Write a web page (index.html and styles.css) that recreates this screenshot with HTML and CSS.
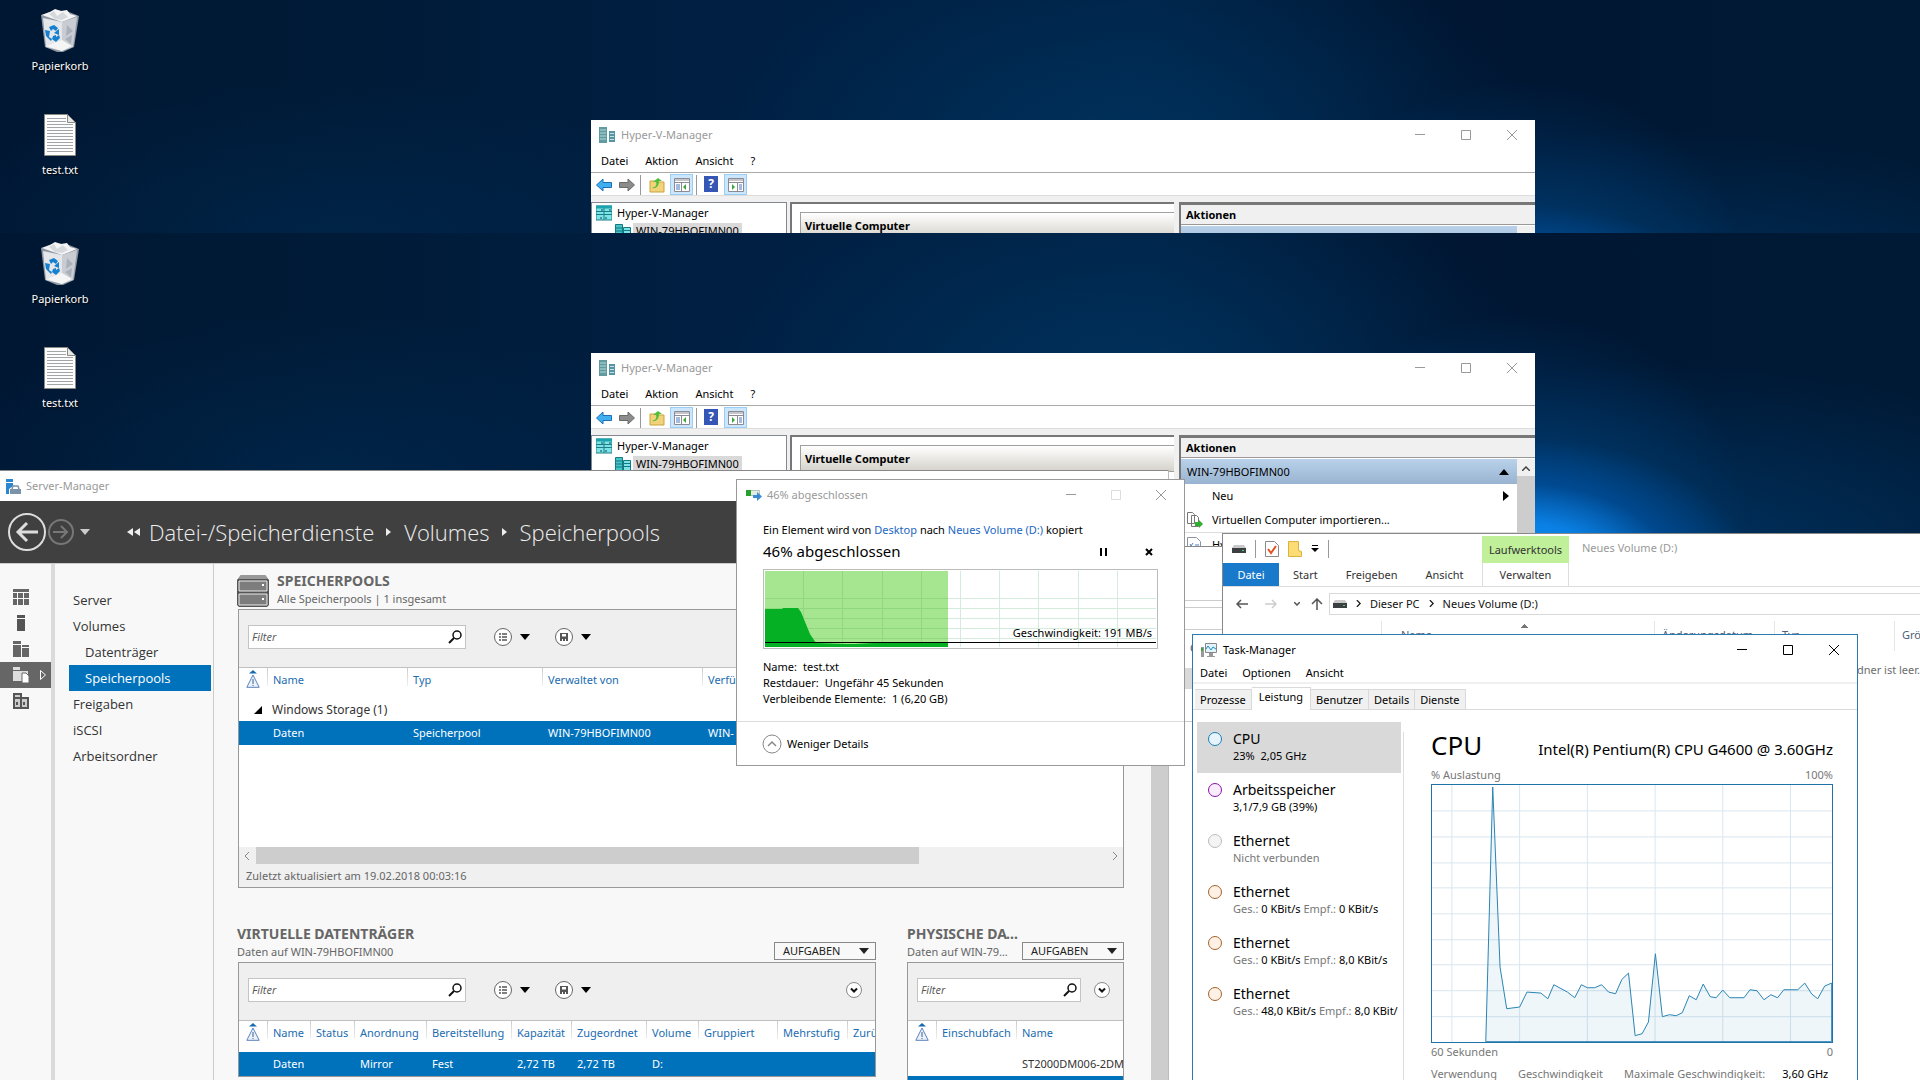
FILE: index.html
```html
<!DOCTYPE html>
<html lang="de">
<head>
    <meta charset="UTF-8">
    <meta name="viewport" content="width=device-width, initial-scale=1.0">
    <title>Desktop</title>
    <link rel="stylesheet" href="styles.css">
</head>
<body>
    <!-- shared icons -->
    <svg class="sprite" aria-hidden="true">
        <symbol id="bin" viewBox="0 0 38 43">
            <path d="M0 6l4 32 12 5h6l11-5 5-31-10-4-14-2z" fill="#8d97a3"/>
            <path d="M1 6l8-3 5-3 6 2 6-1 3 4 7 2-15 6z" fill="#f4f4f4"/>
            <path d="M8 5l5-3 3 5 6-4 5 5-6 3-7-1z" fill="#d5d9dc"/>
            <path d="M2 9l19 4v29L5 38z" fill="#e4e6ea"/>
            <path d="M21 13l15-5-4 30-11 4z" fill="#c9cdd3"/>
            <path d="M26 16l6 6-7 5zM24 30l7-4-1 9z" fill="#aab0b9"/>
            <path d="M6 37l15-6 10 6-10 5z" fill="#f5f5f5"/>
            <path d="M8 18l5-2 4 3-2 3-3-2-2 2zM4 21l5 1-1 6 3 2-1 2-5-5zM18 20v6l-5-2zM12 27l3-1v2l3-2 1 3-4 4-4-3z" fill="#1580d0"/>
        </symbol>
        <symbol id="textfile" viewBox="0 0 32 42">
            <path d="M.5.5h23l8 8v33H.5z" fill="#fdfdfd" stroke="#8a8a82"/>
            <path d="M23.500.5v8h8z" fill="#e6e6e6" stroke="#8a8a82"/>
            <path d="M3 4.500h19M3 7.500h19M3 10.500h26M3 13.500h26M3 16.500h26M3 19.500h26M3 22.500h26M3 25.500h26M3 28.500h26M3 31.500h26M3 34.500h26M3 37.500h26" stroke="#a2a5a8"/>
        </symbol>
        <symbol id="hyperv" viewBox="0 0 16 16">
            <path d="M0 0h8v16H0z" fill="#5f9ba0"/><path d="M1 3h6M1 6h6M1 9h6M1 12h6" stroke="#b9d8d8"/>
            <path d="M10 4h6v11h-6z" fill="#5795a5"/><path d="M11 6.500h4M11 9.500h4M11 12.500h4" stroke="#c5e0e0"/>
        </symbol>
        <symbol id="servers" viewBox="0 0 16 16">
            <path d="M0 1h16v14H0z" fill="#7ee3e6" stroke="#1c7f87"/>
            <path d="M0 2h16" stroke="#1ba4ad" stroke-width="3"/><path d="M8 3v12M0 6.500h16M0 9.500h16" stroke="#1c7f87"/>
            <path d="M5 5h2M13 5h2M5 12v2M10 12v2" stroke="#0d4f55"/>
        </symbol>
        <symbol id="host" viewBox="0 0 16 16">
            <path d="M.5 1.500h7v13h-7z" fill="#46c4ca" stroke="#137a82"/><path d="M8.500 4.500h7v10h-7z" fill="#7ee3e6" stroke="#137a82"/>
            <path d="M1 5h6M1 8h6M1 11h6M9 7.500h6M9 10.500h6" stroke="#137a82"/>
        </symbol>
        <symbol id="bigback" viewBox="0 0 16 14">
            <path d="M.5 7l6.500-6v3.500h8.500v5H7V13z" fill="#3fb0ef" stroke="#1c6fb5"/>
        </symbol>
        <symbol id="bigfwd" viewBox="0 0 16 14">
            <path d="M15.500 7L9 1v3.500H.5v5H9V13z" fill="#8c8c8c" stroke="#6a6a6a"/>
        </symbol>
        <symbol id="upfolder" viewBox="0 0 16 16">
            <path d="M1 4h5l1 1h8v10H1z" fill="#f2d27a" stroke="#c9a43e"/>
            <path d="M3 11c4-1 5-3 4-6H4l5-4 4 3h-3c0 5-3 8-7 7z" fill="#4fbf3a"/>
        </symbol>
        <symbol id="paneleft" viewBox="0 0 16 14">
            <path d="M.5.5h15v13H.5z" fill="#fff" stroke="#8b8b95"/><path d="M1 2h14M1 4.500h14M7.500 4v10" stroke="#8b8b95"/>
            <path d="M2 7h4M2 9h4M2 11h4" stroke="#4a74b8"/><path d="M12 6v6l-3-3z" fill="#3fa53a"/>
        </symbol>
        <symbol id="paneright" viewBox="0 0 16 14">
            <path d="M.5.5h15v13H.5z" fill="#fff" stroke="#8b8b95"/><path d="M1 2h14M1 4.500h14M9.500 4v10" stroke="#8b8b95"/>
            <path d="M11 7h3M11 9h3M11 11h3" stroke="#4a74b8"/><path d="M4 6v6l3-3z" fill="#3fa53a"/>
        </symbol>
        <symbol id="min" viewBox="0 0 10 10"><path d="M0 4.500h10" stroke="currentColor"/></symbol>
        <symbol id="max" viewBox="0 0 10 10"><path d="M.5.5h9v9h-9z" fill="none" stroke="currentColor"/></symbol>
        <symbol id="close" viewBox="0 0 10 10"><path d="M0 0l10 10M10 0L0 10" stroke="currentColor"/></symbol>
        <symbol id="down" viewBox="0 0 10 6"><path d="M0 0h10L5 6z" fill="currentColor"/></symbol>
        <symbol id="scrollup" viewBox="0 0 8 5"><path d="M0 5l4-4 4 4" fill="none" stroke="#444" stroke-width="1.500"/></symbol>
        <symbol id="search" viewBox="0 0 14 14">
            <circle cx="9" cy="5" r="4" fill="none" stroke="#111" stroke-width="1.500"/><path d="M6 8l-5 5" stroke="#111" stroke-width="2"/>
        </symbol>
        <symbol id="list" viewBox="0 0 18 18">
            <circle cx="9" cy="9" r="8.500" fill="#fff" stroke="#666"/>
            <path d="M5 6h2M8 6h5M5 9h2M8 9h5M5 12h2M8 12h5" stroke="#555" stroke-width="1.500"/>
        </symbol>
        <symbol id="save" viewBox="0 0 18 18">
            <circle cx="9" cy="9" r="8.500" fill="#fff" stroke="#666"/>
            <path d="M5 5h8v8H5z" fill="#555"/><path d="M7 6h4v2.500H7zM7 11h1v2H7zM10 11h1v2h-1z" fill="#fff"/>
        </symbol>
        <symbol id="expand" viewBox="0 0 16 16">
            <circle cx="8" cy="8" r="7.500" fill="#fff" stroke="#888"/><path d="M5 6.500l3 3 3-3" fill="none" stroke="#111" stroke-width="2"/>
        </symbol>
        <symbol id="warn" viewBox="0 0 14 18">
            <path d="M3 3.500L7 0l4 3.500z" fill="#1569ae"/>
            <path d="M7 5l6.200 12.300H.8z" fill="#eef3fb" stroke="#5b83bd"/><path d="M7 9v5M7 15v1" stroke="#35608f"/>
        </symbol>
        <symbol id="drive" viewBox="0 0 14 8">
            <path d="M2 0h10l2 3H0z" fill="#c9c9c9"/><path d="M0 3h14v5H0z" fill="#3c3f42"/><path d="M10 5h2v1h-2z" fill="#3ee06b"/>
        </symbol>
        <symbol id="chev" viewBox="0 0 6 8"><path d="M1 0l4 4-4 4" fill="none" stroke="currentColor" stroke-width="1.500"/></symbol>
    </svg>

    <div class="strip strip-top">
        <div class="shortcuts">
            <a class="shortcut" href="#"><svg width="38" height="43"><use href="#bin"/></svg><span>Papierkorb</span></a>
            <a class="shortcut" href="#"><svg width="32" height="42"><use href="#textfile"/></svg><span>test.txt</span></a>
        </div>
        <section class="window hyperv">
            <header class="titlebar inactive">
                <svg width="16" height="16"><use href="#hyperv"/></svg><span class="caption">Hyper-V-Manager</span>
                <button aria-label="Minimieren"><svg><use href="#min"/></svg></button>
                <button aria-label="Maximieren"><svg><use href="#max"/></svg></button>
                <button aria-label="Schließen"><svg><use href="#close"/></svg></button>
            </header>
            <nav class="menu"><button>Datei</button><button>Aktion</button><button>Ansicht</button><button>?</button></nav>
            <div class="tools">
                <button aria-label="Zurück"><svg width="16" height="14"><use href="#bigback"/></svg></button>
                <button aria-label="Vorwärts"><svg width="16" height="14"><use href="#bigfwd"/></svg></button>
                <i class="sep"></i>
                <button aria-label="Nach oben"><svg width="16" height="16"><use href="#upfolder"/></svg></button>
                <button class="on" aria-label="Konsolenstruktur"><svg width="16" height="14"><use href="#paneleft"/></svg></button>
                <i class="sep"></i>
                <button class="help">?</button>
                <button class="on" aria-label="Aktionsbereich"><svg width="16" height="14"><use href="#paneright"/></svg></button>
            </div>
            <div class="panes">
                <div class="tree">
                    <div><svg width="16" height="16"><use href="#servers"/></svg><span>Hyper-V-Manager</span></div>
                    <div class="child"><svg width="16" height="16"><use href="#host"/></svg><span class="sel">WIN-79HBOFIMN00</span></div>
                </div>
                <div class="middle"><h2>Virtuelle Computer</h2></div>
                <div class="actions">
                    <h2>Aktionen</h2>
                    <div class="actions-body">
                        <div class="actions-list"><div class="group"></div></div>
                        <div class="vscroll"><svg width="8" height="5"><use href="#scrollup"/></svg></div>
                    </div>
                </div>
            </div>
        </section>
    </div>

    <div class="strip strip-main">
        <div class="shortcuts">
            <a class="shortcut" href="#"><svg width="38" height="43"><use href="#bin"/></svg><span>Papierkorb</span></a>
            <a class="shortcut" href="#"><svg width="32" height="42"><use href="#textfile"/></svg><span>test.txt</span></a>
        </div>
        <section class="window hyperv">
            <header class="titlebar inactive">
                <svg width="16" height="16"><use href="#hyperv"/></svg><span class="caption">Hyper-V-Manager</span>
                <button aria-label="Minimieren"><svg><use href="#min"/></svg></button>
                <button aria-label="Maximieren"><svg><use href="#max"/></svg></button>
                <button aria-label="Schließen"><svg><use href="#close"/></svg></button>
            </header>
            <nav class="menu"><button>Datei</button><button>Aktion</button><button>Ansicht</button><button>?</button></nav>
            <div class="tools">
                <button aria-label="Zurück"><svg width="16" height="14"><use href="#bigback"/></svg></button>
                <button aria-label="Vorwärts"><svg width="16" height="14"><use href="#bigfwd"/></svg></button>
                <i class="sep"></i>
                <button aria-label="Nach oben"><svg width="16" height="16"><use href="#upfolder"/></svg></button>
                <button class="on" aria-label="Konsolenstruktur"><svg width="16" height="14"><use href="#paneleft"/></svg></button>
                <i class="sep"></i>
                <button class="help">?</button>
                <button class="on" aria-label="Aktionsbereich"><svg width="16" height="14"><use href="#paneright"/></svg></button>
            </div>
            <div class="panes">
                <div class="tree">
                    <div><svg width="16" height="16"><use href="#servers"/></svg><span>Hyper-V-Manager</span></div>
                    <div class="child"><svg width="16" height="16"><use href="#host"/></svg><span class="sel">WIN-79HBOFIMN00</span></div>
                </div>
                <div class="middle"><h2>Virtuelle Computer</h2></div>
                <div class="actions">
                    <h2>Aktionen</h2>
                    <div class="actions-body">
                        <div class="actions-list">
                            <button class="group"><span>WIN-79HBOFIMN00</span><svg width="10" height="6" viewBox="0 0 10 6"><path d="M0 6h10L5 0z"/></svg></button>
                            <button><i></i><span>Neu</span><svg width="6" height="10" viewBox="0 0 6 10"><path d="M0 0v10l6-5z"/></svg></button>
                            <button><i><svg width="16" height="16" viewBox="0 0 16 16"><path d="M.5.5h5l2 2v9h-7zM4.500 3.500h5l2 2v9h-7z" fill="#fff" stroke="#777"/><path d="M8 10h4V8l4 4-4 4v-2H8z" fill="#2fae2f"/></svg></i><span>Virtuellen Computer importieren...</span></button>
                            <button class="ruled"><i><svg width="14" height="16" viewBox="0 0 14 16"><path d="M.5.5h9l4 4v11H.500z" fill="#fff" stroke="#8a94a0"/><path d="M3 7l1 2 2-3M8 8h4M3 12l1 1 2-3M8 12h4" fill="none" stroke="#4a83c4"/></svg></i><span>Hy</span></button>
                        </div>
                        <div class="vscroll"><svg width="8" height="5"><use href="#scrollup"/></svg></div>
                    </div>
                </div>
            </div>
        </section>
    </div>

    <div class="window backdrop">
        <div class="row-a"></div><div class="row-b"></div><div class="row-c">C</div><div class="row-d"></div>
    </div>

    <section class="window server">
        <header class="titlebar inactive">
            <svg width="16" height="15" viewBox="0 0 16 15"><path d="M0 0h7v3H0zM0 4h7v3l-4 3v5H0z" fill="#2b87cf"/><path d="M4 10h11v5H4z" fill="#7a93a8"/><path d="M6 10l1-3h5l1 3" fill="none" stroke="#7a93a8" stroke-width="1.500"/></svg>
            <span class="caption">Server-Manager</span>
        </header>
        <div class="crumbbar">
            <button aria-label="Zurück"><svg width="38" height="38" viewBox="0 0 38 38"><circle cx="19" cy="19" r="18" fill="none" stroke="#ddd" stroke-width="2"/><path d="M30 19H10M19 10l-9 9 9 9" fill="none" stroke="#ddd" stroke-width="3"/></svg></button>
            <button aria-label="Vorwärts"><svg width="26" height="26" viewBox="0 0 26 26"><circle cx="13" cy="13" r="12" fill="none" stroke="#777" stroke-width="2"/><path d="M5 13h14M13 7l6 6-6 6" fill="none" stroke="#777" stroke-width="2"/></svg></button>
            <svg class="drop" width="10" height="6"><use href="#down"/></svg>
            <svg class="first" width="14" height="8" viewBox="0 0 14 8"><path d="M6 0v8L0 4zM13 0v8L7 4z" fill="#eee"/></svg>
            <a href="#">Datei-/Speicherdienste</a>
            <svg width="6" height="8" viewBox="0 0 6 8"><path d="M0 0v8l5-4z" fill="#eee"/></svg>
            <a href="#">Volumes</a>
            <svg width="6" height="8" viewBox="0 0 6 8"><path d="M0 0v8l5-4z" fill="#eee"/></svg>
            <a href="#">Speicherpools</a>
        </div>
        <div class="server-body">
            <div class="rail">
                <a href="#" aria-label="Dashboard"><svg width="16" height="16" viewBox="0 0 16 16"><path d="M0 0h16v3H0zM0 4h4v5H0zM5 4h5v5H5zM11 4h5v5h-5zM0 10h4v6H0zM5 10h5v6H5zM11 10h5v6h-5z" fill="#666"/></svg></a>
                <a href="#" aria-label="Lokaler Server"><svg width="16" height="16" viewBox="0 0 16 16"><path d="M4 0h8v3H4zM4 4h8v12H4z" fill="#555"/></svg></a>
                <a href="#" aria-label="Alle Server"><svg width="16" height="16" viewBox="0 0 16 16"><path d="M0 0h8v3H0zM0 4h8v12H0zM9 4h7v2H9zM9 7h7v9H9z" fill="#666"/></svg></a>
                <a href="#" class="sel" aria-label="Dateidienste"><svg width="16" height="16" viewBox="0 0 16 16"><path d="M0 0h7v3H0zM0 4h15v3H9v7H0z" fill="#ddd"/><path d="M9 6h4l3 3v7H9z" fill="#fff" stroke="#666"/></svg><svg width="6" height="10" viewBox="0 0 6 10"><path d="M.5.5v9l5-4.500z" fill="none" stroke="#fff"/></svg></a>
                <a href="#" aria-label="Hyper-V"><svg width="16" height="16" viewBox="0 0 16 16"><path d="M1 1h7v14H1zM8 5h7v10H8z" fill="#ccc" stroke="#555" stroke-width="2"/><path d="M1 5h6M4 9v3M11 9v3" stroke="#555" stroke-width="2"/></svg></a>
            </div>
            <nav class="sidenav">
                <a href="#">Server</a>
                <a href="#">Volumes</a>
                <a href="#" class="sub">Datenträger</a>
                <a href="#" class="sub sel">Speicherpools</a>
                <a href="#">Freigaben</a>
                <a href="#">iSCSI</a>
                <a href="#">Arbeitsordner</a>
            </nav>
            <main class="tiles">
                <section class="tile pools">
                    <div class="tile-head">
                        <svg width="32" height="32" viewBox="0 0 32 32"><path d="M4 0h24l4 5v25l-2 2H2l-2-2V5z" fill="#555"/><path d="M4 0h24l3 4H1z" fill="#999"/><path d="M2 6h28v10H2zM2 19h28v11H2z" fill="#7d7d7d" stroke="#eee"/><path d="M25 9h2v2h-2zM25 23h2v2h-2z" fill="#fff"/></svg>
                        <div class="names"><h2>SPEICHERPOOLS</h2><p>Alle Speicherpools | 1 insgesamt</p></div>
                    </div>
                    <div class="tile-box">
                        <div class="filterbar">
                            <label class="filter"><input type="text" placeholder="Filter" aria-label="Filter"><svg width="14" height="14"><use href="#search"/></svg></label>
                            <button class="pick" aria-label="Ansicht"><svg width="18" height="18"><use href="#list"/></svg><svg width="10" height="6"><use href="#down"/></svg></button>
                            <button class="pick" aria-label="Speichern"><svg width="18" height="18"><use href="#save"/></svg><svg width="10" height="6"><use href="#down"/></svg></button>
                        </div>
                        <div class="grid">
                            <table>
                                <colgroup><col class="w28"><col class="w140"><col class="w135"><col class="w160"><col></colgroup>
                                <thead><tr><th><svg width="14" height="18"><use href="#warn"/></svg></th><th>Name</th><th>Typ</th><th>Verwaltet von</th><th>Verfü</th></tr></thead>
                                <tbody>
                                    <tr class="group"><td><svg width="8" height="8" viewBox="0 0 8 8"><path d="M8 0v8H0z"/></svg></td><td colspan="4">Windows Storage (1)</td></tr>
                                    <tr class="sel"><td></td><td>Daten</td><td>Speicherpool</td><td>WIN-79HBOFIMN00</td><td>WIN-</td></tr>
                                </tbody>
                            </table>
                        </div>
                        <div class="hscroll">
                            <svg width="6" height="8" viewBox="0 0 6 8"><path d="M5 0L1 4l4 4" fill="none" stroke="#888"/></svg>
                            <div class="track"><i></i></div>
                            <svg width="6" height="8" viewBox="0 0 6 8"><path d="M1 0l4 4-4 4" fill="none" stroke="#888"/></svg>
                        </div>
                        <footer>Zuletzt aktualisiert am 19.02.2018 00:03:16</footer>
                    </div>
                </section>
                <div class="tile-row">
                    <section class="tile disks">
                        <div class="tile-head">
                            <div class="names"><h2>VIRTUELLE DATENTRÄGER</h2><p>Daten auf WIN-79HBOFIMN00</p></div>
                            <button class="tasks">AUFGABEN<svg width="10" height="6"><use href="#down"/></svg></button>
                        </div>
                        <div class="tile-box">
                            <div class="filterbar">
                                <label class="filter"><input type="text" placeholder="Filter" aria-label="Filter"><svg width="14" height="14"><use href="#search"/></svg></label>
                                <button class="pick" aria-label="Ansicht"><svg width="18" height="18"><use href="#list"/></svg><svg width="10" height="6"><use href="#down"/></svg></button>
                                <button class="pick" aria-label="Speichern"><svg width="18" height="18"><use href="#save"/></svg><svg width="10" height="6"><use href="#down"/></svg></button>
                                <button class="more" aria-label="Erweitern"><svg width="16" height="16"><use href="#expand"/></svg></button>
                            </div>
                            <div class="grid">
                                <table>
                                    <colgroup><col class="w28"><col class="w43"><col class="w44"><col class="w72"><col class="w85"><col class="w60"><col class="w75"><col class="w52"><col class="w79"><col class="w70"><col></colgroup>
                                    <thead><tr><th><svg width="14" height="18"><use href="#warn"/></svg></th><th>Name</th><th>Status</th><th>Anordnung</th><th>Bereitstellung</th><th>Kapazität</th><th>Zugeordnet</th><th>Volume</th><th>Gruppiert</th><th>Mehrstufig</th><th>Zurü</th></tr></thead>
                                    <tbody>
                                        <tr class="sel"><td></td><td>Daten</td><td></td><td>Mirror</td><td>Fest</td><td>2,72 TB</td><td>2,72 TB</td><td>D:</td><td></td><td></td><td></td></tr>
                                    </tbody>
                                </table>
                            </div>
                        </div>
                    </section>
                    <section class="tile physical">
                        <div class="tile-head">
                            <div class="names"><h2>PHYSISCHE DATENTRÄGER</h2><p>Daten auf WIN-79HBOFIMN00</p></div>
                            <button class="tasks">AUFGABEN<svg width="10" height="6"><use href="#down"/></svg></button>
                        </div>
                        <div class="tile-box">
                            <div class="filterbar">
                                <label class="filter"><input type="text" placeholder="Filter" aria-label="Filter"><svg width="14" height="14"><use href="#search"/></svg></label>
                                <button class="more" aria-label="Erweitern"><svg width="16" height="16"><use href="#expand"/></svg></button>
                            </div>
                            <div class="grid">
                                <table>
                                    <colgroup><col class="w28"><col class="w80"><col></colgroup>
                                    <thead><tr><th><svg width="14" height="18"><use href="#warn"/></svg></th><th>Einschubfach</th><th>Name</th></tr></thead>
                                    <tbody>
                                        <tr><td></td><td></td><td>ST2000DM006-2DM</td></tr>
                                        <tr class="sel"><td></td><td></td><td></td></tr>
                                    </tbody>
                                </table>
                            </div>
                        </div>
                    </section>
                </div>
            </main>
            <div class="server-scroll"></div>
        </div>
    </section>

    <section class="window copy">
        <header class="titlebar inactive">
            <svg width="16" height="12" viewBox="0 0 16 12"><path d="M.5 1.500h13v5H.5z" fill="#e4ece4" stroke="#b5c4b5"/><path d="M0 1h5v6H0z" fill="#27a02c"/><path d="M7 6h4V3l5 4.500-5 4.500V9H7z" fill="#3d8bd4"/></svg>
            <span class="caption">46% abgeschlossen</span>
            <button aria-label="Minimieren"><svg><use href="#min"/></svg></button>
            <button class="off" aria-label="Maximieren" disabled><svg><use href="#max"/></svg></button>
            <button aria-label="Schließen"><svg><use href="#close"/></svg></button>
        </header>
        <div class="copy-body">
            <p>Ein Element wird von <a href="#">Desktop</a> nach <a href="#">Neues Volume (D:)</a> kopiert</p>
            <div class="copy-state">
                <h2>46% abgeschlossen</h2>
                <button aria-label="Anhalten"><svg width="7" height="8" viewBox="0 0 7 8"><path d="M0 0h2v8H0zM5 0h2v8H5z"/></svg></button>
                <button aria-label="Abbrechen"><svg width="8" height="8" viewBox="0 0 8 8"><path d="M1 1l6 6M7 1L1 7" stroke="#000" stroke-width="2"/></svg></button>
            </div>
            <div class="speed">
                <svg width="100%" height="76" viewBox="0 0 391 76" preserveAspectRatio="none">
                    <path d="M0 27.500h391M0 37.500h391M0 47.500h391M0 57.500h391M0 67.500h391M38.500 0v76M77.500 0v76M117.500 0v76M156.500 0v76M195.500 0v76M234.500 0v76M273.500 0v76M313.500 0v76M352.500 0v76" stroke="#d3ecdb"/>
                    <path d="M0 0h183v76H0z" fill="#a7e690"/>
                    <path d="M0 27.500h183M0 37.500h183M0 47.500h183M0 57.500h183M0 67.500h183M38.500 0v76M77.500 0v76M117.500 0v76M156.500 0v76" stroke="#90d87d"/>
                    <path d="M0 38h17l1-1h15l3 4 9 22 6 9 30 1h8l20-1h74v4H0z" fill="#06b025"/>
                    <path d="M0 71.500h391" stroke="#000"/>
                </svg>
                <span>Geschwindigkeit: 191 MB/s</span>
            </div>
            <dl>
                <div><dt>Name:</dt><dd>test.txt</dd></div>
                <div><dt>Restdauer:</dt><dd>Ungefähr 45 Sekunden</dd></div>
                <div><dt>Verbleibende Elemente:</dt><dd>1 (6,20 GB)</dd></div>
            </dl>
        </div>
        <button class="less"><svg width="20" height="20" viewBox="0 0 20 20"><circle cx="10" cy="10" r="9" fill="#fff" stroke="#888"/><path d="M6 12l4-4 4 4" fill="none" stroke="#888" stroke-width="1.500"/></svg>Weniger Details</button>
    </section>

    <section class="window explorer">
        <header class="ribbon-top">
            <div class="quick">
                <svg width="14" height="8"><use href="#drive"/></svg><i class="sep"></i>
                <button aria-label="Eigenschaften"><svg width="14" height="16" viewBox="0 0 14 16"><path d="M.5.5h9l4 4v11H.5z" fill="#fff" stroke="#8a8a8a"/><path d="M3 8l3 4 5-7" fill="none" stroke="#e0531f" stroke-width="2"/></svg></button>
                <button aria-label="Neuer Ordner"><svg width="14" height="16" viewBox="0 0 14 16"><path d="M.5.5h10v9l3 1v5H.5z" fill="#fbdc75" stroke="#dcb23c"/></svg></button>
                <svg width="8" height="8" viewBox="0 0 8 8"><path d="M1 0h6v1H1zM0 3h8L4 7z"/></svg><i class="sep"></i>
            </div>
            <span class="drivetools">Laufwerktools</span>
            <span class="wtitle">Neues Volume (D:)</span>
        </header>
        <nav class="ribbon-tabs">
            <button class="file">Datei</button><button>Start</button><button>Freigeben</button><button>Ansicht</button><button class="manage">Verwalten</button>
        </nav>
        <div class="address">
            <button aria-label="Zurück"><svg width="12" height="10" viewBox="0 0 12 10"><path d="M12 5H1M5 1L1 5l4 4" fill="none" stroke="#555" stroke-width="1.500"/></svg></button>
            <button aria-label="Vorwärts"><svg width="12" height="10" viewBox="0 0 12 10"><path d="M0 5h11M7 1l4 4-4 4" fill="none" stroke="#ccc" stroke-width="1.500"/></svg></button>
            <button aria-label="Verlauf"><svg width="6" height="4" viewBox="0 0 6 4"><path d="M0 0l3 3 3-3" fill="none" stroke="#555" stroke-width="1.500"/></svg></button>
            <button aria-label="Nach oben"><svg width="12" height="12" viewBox="0 0 12 12"><path d="M6 12V1M1 6l5-5 5 5" fill="none" stroke="#555" stroke-width="1.500"/></svg></button>
            <div class="path"><svg width="14" height="8"><use href="#drive"/></svg><svg width="5" height="7"><use href="#chev"/></svg><a href="#">Dieser PC</a><svg width="5" height="7"><use href="#chev"/></svg><a href="#">Neues Volume (D:)</a></div>
        </div>
        <div class="columns"><span>Name</span><span>Änderungsdatum</span><span>Typ</span><span>Größe</span></div>
        <p class="empty">Dieser Ordner ist leer.</p>
    </section>

    <section class="window taskmgr">
        <header class="titlebar">
            <svg width="16" height="16" viewBox="0 0 16 16"><path d="M0 5h3v10H0z" fill="#9a9a9a"/><path d="M0 6h2v3H0z" fill="#3ba53b"/><path d="M4.500 1.500h11v9h-11z" fill="#e3f3fb" stroke="#888"/><path d="M5 7l2-3 3 4 2-3 3 2" fill="none" stroke="#1b8fc4"/><path d="M8 11h4v3h2v1H6v-1h2z" fill="#999"/></svg>
            <span class="caption">Task-Manager</span>
            <button aria-label="Minimieren"><svg><use href="#min"/></svg></button>
            <button aria-label="Maximieren"><svg><use href="#max"/></svg></button>
            <button aria-label="Schließen"><svg><use href="#close"/></svg></button>
        </header>
        <nav class="menu"><button>Datei</button><button>Optionen</button><button>Ansicht</button></nav>
        <div class="tabs"><button>Prozesse</button><button class="sel">Leistung</button><button>Benutzer</button><button>Details</button><button>Dienste</button></div>
        <div class="perf">
            <div class="meters">
                <button class="cpu sel"><i></i><b>CPU</b><span>23%&nbsp; 2,05 GHz</span></button>
                <button class="ram"><i></i><b>Arbeitsspeicher</b><span>3,1/7,9 GB (39%)</span></button>
                <button class="none"><i></i><b>Ethernet</b><span><em>Nicht verbunden</em></span></button>
                <button class="net"><i></i><b>Ethernet</b><span><em>Ges.:</em> 0 KBit/s <em>Empf.:</em> 0 KBit/s</span></button>
                <button class="net"><i></i><b>Ethernet</b><span><em>Ges.:</em> 0 KBit/s <em>Empf.:</em> 8,0 KBit/s</span></button>
                <button class="net"><i></i><b>Ethernet</b><span><em>Ges.:</em> 48,0 KBit/s <em>Empf.:</em> 8,0 KBit/</span></button>
            </div>
            <div class="detail">
                <div class="cpu-head"><h1>CPU</h1><span>Intel(R) Pentium(R) CPU G4600 @ 3.60GHz</span></div>
                <div class="scale"><span>% Auslastung</span><span>100%</span></div>
                <svg class="chart" viewBox="94 253 1205 772" preserveAspectRatio="none">
                    <path class="lines" d="M154 253v772M358 253v772M562 253v772M766 253v772M970 253v772M1174 253v772M94 331h1205M94 409h1205M94 487h1205M94 562h1205M94 640h1205M94 718h1205M94 793h1205M94 871h1205M94 949h1205"/>
                    <polygon points="256,1024 277,259 299,800 319,925 358,920 380,875 422,878 443,895 461,853 502,875 524,892 544,853 562,862 584,862 605,853 626,875 647,880 666,837 686,818 706,1006 727,1000 746,965 767,760 788,949 809,943 830,946 848,937 869,886 890,898 911,851 932,889 950,892 970,869 991,892 1034,892 1052,868 1073,871 1094,898 1115,883 1135,892 1154,868 1196,868 1217,848 1238,881 1256,895 1277,857 1298,848 1298,1024"/>
                </svg>
                <div class="scale"><span>60 Sekunden</span><span>0</span></div>
                <div class="stats"><span>Verwendung</span><span>Geschwindigkeit</span><span>Maximale Geschwindigkeit:</span><b>3,60 GHz</b></div>
            </div>
        </div>
    </section>
</body>
</html>
```
FILE: styles.css
```css
* {
    box-sizing: border-box;
}

body {
    margin: 0;
    height: 100vh;
    overflow: hidden;
    display: flex;
    flex-direction: column;
    position: relative;
    font-family: "Noto Sans", "Open Sans", sans-serif;
    font-size: 11px;
    line-height: 16px;
    color: #000;
}

h1, h2, p, dl, dd {
    margin: 0;
}

button {
    font: inherit;
    color: inherit;
    background: none;
    border: 0;
    padding: 0;
    text-align: left;
    white-space: nowrap;
}

a {
    color: inherit;
    text-decoration: none;
}

svg {
    display: block;
    flex: none;
}

.sprite {
    position: absolute;
    width: 0;
    height: 0;
}

/* wallpaper */
.strip {
    position: relative;
    overflow: hidden;
    background:
        radial-gradient(ellipse 230px 130px at 1520px 335px, #0a8cf5 0%, #0a80e4 35%, rgba(0, 90, 180, 0.5) 65%, rgba(0, 70, 140, 0) 100%),
        radial-gradient(ellipse 230px 210px at 1520px 290px, rgba(0, 80, 150, 0.6) 0%, rgba(0, 55, 105, 0) 100%),
        radial-gradient(ellipse 460px 200px at 1660px 330px, rgba(0, 58, 108, 0.8) 0%, rgba(0, 40, 80, 0) 100%),
        radial-gradient(ellipse 420px 200px at 1130px 140px, rgba(0, 52, 96, 0.8) 0%, rgba(0, 40, 80, 0) 100%),
        radial-gradient(ellipse 400px 160px at 330px 240px, rgba(0, 40, 78, 0.7) 0%, rgba(0, 30, 70, 0) 100%),
        linear-gradient(90deg, #001733 0%, #001a36 14%, #001f42 38%, #002246 60%, #001632 76%, #001a36 100%);
}

.strip-top {
    flex: 0 0 233px;
}

.strip-main {
    flex: 1;
}

.shortcuts {
    display: flex;
    flex-direction: column;
    align-items: flex-start;
    padding: 9px 22px;
}

.shortcut {
    display: flex;
    flex-direction: column;
    align-items: center;
    gap: 6px;
    width: 76px;
    height: 105px;
    color: #fff;
    text-shadow: 1px 1px 2px #000;
}

/* windows */
.window {
    position: absolute;
    background: #fff;
    overflow: hidden;
}

.titlebar {
    flex: none;
    display: flex;
    align-items: center;
    height: 29px;
    padding: 0 3px 0 8px;
    gap: 6px;
}

.titlebar .caption {
    flex: 1;
}

.titlebar.inactive {
    color: #999;
}

.titlebar button {
    width: 40px;
    display: flex;
    justify-content: center;
}

.titlebar button svg {
    width: 10px;
    height: 10px;
}

.titlebar .off {
    color: #ddd;
}

.menu {
    flex: none;
    display: flex;
    align-items: center;
    gap: 17px;
    padding: 0 10px;
    height: 23px;
}

.sep {
    width: 1px;
    height: 18px;
    background: #999;
}

/* Hyper-V */
.hyperv {
    left: 591px;
    top: 120px;
    width: 944px;
    height: 193px;
    display: flex;
    flex-direction: column;
}

.tools {
    flex: none;
    display: flex;
    align-items: flex-end;
    gap: 3px;
    height: 24px;
    padding-left: 3px;
    border-top: 1px solid #aaa;
    border-bottom: 1px solid #ddd;
}

.tools button {
    display: flex;
    align-items: center;
    justify-content: center;
    width: 20px;
    height: 20px;
}

.tools .sep {
    margin-right: 3px;
    height: 20px;
}

.tools .on {
    background: #cce6fb;
    border: 1px solid #99cdf3;
    width: 23px;
    height: 21px;
}

.tools .help {
    width: 14px;
    height: 16px;
    margin: 0 3px 3px 1px;
    background: #3556b5;
    color: #fff;
    font-size: 12px;
    font-weight: bold;
}

.panes {
    flex: 1;
    display: flex;
    gap: 3px;
    min-height: 0;
    padding-top: 6px;
    background: #f0f0f0;
}

.tree {
    width: 196px;
    background: #fff;
    border: 1px solid #828790;
    padding: 1px 4px;
}

.tree div {
    display: flex;
    align-items: center;
    gap: 2px;
    height: 18px;
}

.tree span {
    padding: 0 3px;
}

.tree .child {
    padding-left: 19px;
}

.tree .sel {
    background: #d9d9d9;
}

.middle {
    flex: 1;
    background: #fff;
    border-top: 2px solid #777;
    border-left: 2px solid #777;
    padding: 8px 0 0 8px;
}

.middle h2 {
    height: 27px;
    padding: 4px;
    border: 1px solid #a0a0a0;
    border-right: 0;
    background: linear-gradient(#fff, #d4d2ca);
    font-size: 11px;
    line-height: 18px;
}

.actions {
    width: 356px;
    margin-left: 2px;
    background: #fff;
    border-top: 3px solid #777;
    border-left: 2px solid #777;
    display: flex;
    flex-direction: column;
}

.actions h2 {
    flex: none;
    height: 20px;
    padding: 0 5px;
    background: #f0f0f0;
    border-bottom: 1px solid #999;
    font-size: 11px;
    line-height: 19px;
}

.actions-body {
    flex: 1;
    display: flex;
    min-height: 0;
    padding-top: 1px;
}

.actions-list {
    flex: 1;
    display: flex;
    flex-direction: column;
}

.actions-list button {
    display: flex;
    align-items: center;
    gap: 9px;
    height: 24px;
    padding: 0 8px 0 6px;
    flex: none;
}

.actions-list button i {
    width: 16px;
}

.actions-list button span {
    flex: 1;
}

.actions-list .group {
    flex: none;
    height: 25px;
    background: linear-gradient(#b9d1ea, #99b4d1);
}

.actions-list .ruled {
    border-top: 1px solid #ddd;
}

.vscroll {
    width: 18px;
    background: linear-gradient(#f0f0f0 17px, #cdcdcd 17px);
    display: flex;
    justify-content: center;
    padding-top: 7px;
    overflow: hidden;
}

/* white window behind the others */
.backdrop {
    left: 1169px;
    top: 546px;
    bottom: 0;
    width: 60px;
    border-top: 1px solid #888;
}

.backdrop .row-a {
    height: 54px;
    border-bottom: 1px solid #ccc;
}

.backdrop .row-b {
    height: 29px;
    border-bottom: 1px solid #ccc;
    background: linear-gradient(#fff 6px, #ccc 6px, #ccc 7px, #fff 7px);
}

.backdrop .row-c {
    height: 38px;
    padding: 10px 0 0 21px;
    color: #456;
}

.backdrop .row-d {
    height: 54px;
    background: linear-gradient(#d9d9d9 21px, #fff 21px);
    border-bottom: 1px solid #ccc;
}

/* Server-Manager */
.server {
    left: 0;
    top: 470px;
    bottom: 0;
    width: 1169px;
    border-top: 1px solid #888;
    border-right: 1px solid #bbb;
    display: flex;
    flex-direction: column;
    color: #333;
}

.server .titlebar {
    height: 30px;
    padding-left: 6px;
    gap: 4px;
}

.crumbbar {
    flex: none;
    display: flex;
    align-items: center;
    height: 62px;
    padding-left: 8px;
    gap: 12px;
    background: #404040;
    color: #eee;
    font-family: "Open Sans", sans-serif;
    font-size: 22px;
    font-weight: 300;
    line-height: 32px;
}

.crumbbar button + button {
    margin-left: -10px;
}

.crumbbar .drop {
    color: #ccc;
    margin-left: -6px;
}

.crumbbar .first {
    margin: 0 -4px 0 25px;
}

.server-body {
    flex: 1;
    display: flex;
    min-height: 0;
    background: #f8f8f8;
    border-top: 1px solid #ccc;
}

.rail {
    width: 55px;
    padding-top: 20px;
    border-right: 4px solid #dadada;
}

.rail a {
    display: flex;
    align-items: center;
    gap: 11px;
    height: 26px;
    padding-left: 13px;
}

.rail .sel {
    background: #666;
}

.sidenav {
    width: 159px;
    padding: 23px 2px 0 14px;
    border-right: 1px solid #ccc;
    font-family: "Open Sans", sans-serif;
    font-size: 13px;
}

.sidenav a {
    display: block;
    height: 26px;
    padding-left: 4px;
    line-height: 26px;
}

.sidenav .sub {
    padding-left: 16px;
}

.sidenav .sel {
    background: #0072bc;
    color: #fff;
}

.tiles {
    flex: 1;
    min-width: 0;
    padding: 7px 27px 0 23px;
}

.tile-head {
    display: flex;
    align-items: flex-end;
    gap: 3px;
    height: 38px;
    padding-bottom: 2px;
    color: #666;
}

.tile-head > svg {
    margin-right: 5px;
}

.tile-head .names {
    flex: 1;
    min-width: 0;
}

.tile-head h2, .tile-head p {
    overflow: hidden;
    white-space: nowrap;
    text-overflow: ellipsis;
    font-size: 11px;
    line-height: 17px;
}

.tile-head p {
    padding-right: 5px;
}

.tile-head h2 {
    font-size: 14px;
    line-height: 18px;
}

.tile-box {
    margin-left: 1px;
    border: 1px solid #999;
    background: #fff;
    overflow: hidden;
}

.filterbar {
    display: flex;
    align-items: center;
    height: 58px;
    padding: 0 13px 4px 9px;
    gap: 25px;
    background: #efefef;
    border-bottom: 1px solid #c0c0c0;
}

.filter {
    display: flex;
    align-items: center;
    width: 218px;
    height: 24px;
    padding-right: 3px;
    background: #fff;
    border: 1px solid #c4c4c4;
}

.filter input {
    flex: 1;
    min-width: 0;
    border: 0;
    padding: 0 3px;
    background: none;
    font: italic 11px "Open Sans", sans-serif;
}

.filter input::placeholder {
    color: #555;
}

.pick {
    display: flex;
    align-items: center;
    gap: 8px;
    color: #000;
}

.filter + .pick {
    margin-left: 3px;
}

.more {
    margin-left: auto;
}

.grid table {
    table-layout: fixed;
    border-collapse: collapse;
    width: 1000px;
}

.w28 { width: 28px; }
.w43 { width: 43px; }
.w44 { width: 44px; }
.w52 { width: 52px; }
.w60 { width: 60px; }
.w70 { width: 70px; }
.w72 { width: 72px; }
.w75 { width: 75px; }
.w79 { width: 79px; }
.w80 { width: 80px; }
.w85 { width: 85px; }
.w135 { width: 135px; }
.w140 { width: 140px; }
.w160 { width: 160px; }

.grid th {
    height: 31px;
    padding: 0 0 7px 6px;
    color: #1b6cb0;
    font-weight: normal;
    text-align: left;
    white-space: nowrap;
    background: linear-gradient(#ccc, #eee) 0 0 / 1px 18px no-repeat;
}

.grid th:first-child {
    padding: 0 0 10px 7px;
    background: none;
}

.grid td {
    height: 24px;
    padding: 0 0 0 6px;
    white-space: nowrap;
}

.grid .group td {
    height: 22px;
    padding-left: 5px;
    font-size: 12px;
}

.grid .group td:first-child {
    padding-left: 15px;
}

.grid .sel {
    background: #0072bc;
    color: #fff;
}

.pools .grid {
    height: 179px;
}

.hscroll {
    display: flex;
    align-items: center;
    height: 17px;
    padding: 0 5px;
    gap: 6px;
    background: #f0f0f0;
}

.track {
    flex: 1;
    height: 17px;
}

.track i {
    display: block;
    width: 78%;
    height: 17px;
    background: #cdcdcd;
}

.pools footer {
    height: 23px;
    padding: 4px 7px;
    background: #f0f0f0;
    color: #666;
}

.tile-row {
    display: flex;
    gap: 31px;
    padding-top: 36px;
}

.disks {
    flex: 1;
    min-width: 0;
}

.physical {
    width: 217px;
}

.physical .tile-box {
    margin-left: 0;
}

.physical .filterbar {
    gap: 12px;
}

.physical .filter {
    width: 164px;
}

.tasks {
    display: flex;
    align-items: center;
    justify-content: space-between;
    width: 102px;
    height: 18px;
    padding: 0 6px 0 8px;
    border: 1px solid #888;
    background: #f8f8f8;
    color: #222;
}

.server-scroll {
    width: 17px;
    background: #cdcdcd;
}

/* copy dialog */
.copy {
    left: 736px;
    top: 479px;
    width: 449px;
    height: 287px;
    border: 1px solid #999;
    display: flex;
    flex-direction: column;
}

.copy .titlebar {
    padding-left: 9px;
    gap: 5px;
}

.copy-body {
    flex: 1;
    padding: 13px 26px 0 26px;
}

.copy a {
    color: #1a66c4;
}

.copy-state {
    display: flex;
    align-items: center;
    gap: 38px;
    padding: 0 5px 3px 0;
    height: 31px;
}

.copy-state h2 {
    flex: 1;
    padding-bottom: 3px;
    font-size: 15px;
    font-weight: normal;
    line-height: 22px;
}

.speed {
    position: relative;
    height: 80px;
    padding: 1px;
    border: 1px solid #bcbcbc;
}

.speed span {
    position: absolute;
    right: 5px;
    bottom: 7px;
}

.copy dl {
    padding-top: 10px;
}

.copy dl div {
    display: flex;
    gap: 6px;
}

.less {
    display: flex;
    align-items: center;
    gap: 5px;
    height: 44px;
    padding-left: 25px;
    border-top: 1px solid #ddd;
}

/* Explorer */
.explorer {
    left: 1222px;
    right: 0;
    top: 533px;
    bottom: 0;
    border-top: 1px solid #888;
    border-left: 1px solid #888;
    color: #333;
}

.ribbon-top {
    display: flex;
    height: 29px;
}

.quick {
    display: flex;
    align-items: center;
    width: 259px;
    padding-left: 9px;
    gap: 9px;
}

.drivetools {
    width: 87px;
    margin-top: 2px;
    background: #c0f09a;
    line-height: 27px;
    text-align: center;
}

.wtitle {
    padding-left: 13px;
    line-height: 28px;
    color: #999;
}

.ribbon-tabs {
    display: flex;
    height: 24px;
    padding-right: 351px;
    border-bottom: 1px solid #ddd;
}

.ribbon-tabs button {
    padding: 0 14px;
    text-align: center;
}

.ribbon-tabs .file {
    width: 56px;
    background: #1979ca;
    color: #fff;
}

.ribbon-tabs .manage {
    width: 87px;
    margin-left: auto;
    border: solid #ddd;
    border-width: 0 1px;
}

.address {
    display: flex;
    align-items: center;
    gap: 17px;
    height: 34px;
    padding: 0 0 1px 13px;
}

.address button:nth-child(4) {
    margin-left: -6px;
}

.path {
    flex: 1;
    display: flex;
    align-items: center;
    gap: 9px;
    height: 22px;
    margin-left: -11px;
    padding-left: 3px;
    border: 1px solid #d9d9d9;
    border-right: 0;
    color: #111;
}

.columns {
    display: flex;
    height: 30px;
    padding-left: 158px;
    line-height: 27px;
    color: #4c607a;
}

.columns span {
    flex: none;
    width: 120px;
    padding-left: 7px;
    border-left: 1px solid #e5e5e5;
}

.columns span:first-child {
    width: 273px;
    padding-left: 19px;
    background: conic-gradient(from 135deg at 50% 0, #777 90deg, transparent 0) 139px 3px / 7px 4px no-repeat;
}

.empty {
    padding-top: 11px;
    text-align: right;
    color: #6d6d6d;
}

/* Task-Manager */
.taskmgr {
    left: 1192px;
    top: 634px;
    bottom: 0;
    width: 666px;
    border: 1px solid #2a7ab0;
    border-bottom: 0;
    display: flex;
    flex-direction: column;
}

.taskmgr .menu {
    height: 20px;
    padding: 0 7px;
    gap: 15px;
    border-bottom: 2px solid #f0f0f0;
}

.tabs {
    flex: none;
    display: flex;
    align-items: flex-end;
    height: 26px;
    padding-left: 2px;
    border-bottom: 1px solid #d9d9d9;
}

.tabs button {
    height: 20px;
    padding: 0 5px;
    background: #f0f0f0;
    border: solid #d9d9d9;
    border-width: 1px 1px 0 0;
    text-align: center;
}

.tabs .sel {
    height: 23px;
    padding: 0 7px 4px;
    margin-bottom: -1px;
    background: #fff;
}

.perf {
    flex: 1;
    display: flex;
    min-height: 0;
}

.meters {
    width: 211px;
    padding: 12px 0 0 4px;
    background: linear-gradient(#ddd, #ddd) 100% 22px / 1px 100% no-repeat;
    overflow: hidden;
}

.meters button {
    display: grid;
    grid-template-columns: 28px 1fr;
    grid-template-rows: 18px 16px;
    align-items: center;
    width: 204px;
    height: 51px;
    padding: 8px 0 0 8px;
    align-content: start;
}

.meters .sel {
    background: #d9d9d9;
}

.meters i {
    width: 14px;
    height: 14px;
    margin-left: 3px;
    border: 1px solid #a5622e;
    border-radius: 50%;
    background: #fdf0e4;
}

.meters .cpu i {
    border-color: #1b7fb8;
    background: #e8f4fb;
}

.meters .ram i {
    border-color: #8b12ae;
    background: #f8edfb;
}

.meters .none i {
    border-color: #bbb;
    background: #f4f4f4;
}

.meters b {
    font-size: 14px;
    font-weight: normal;
}

.meters span {
    grid-column: 2;
}

.meters em {
    font-style: normal;
    color: #777;
}

.detail {
    flex: 1;
    padding: 15px 24px 0 27px;
}

.cpu-head {
    display: flex;
    align-items: baseline;
    justify-content: space-between;
    height: 41px;
    font-size: 15px;
    line-height: 40px;
}

.cpu-head h1 {
    font-size: 26px;
    font-weight: normal;
}

.scale {
    display: flex;
    justify-content: space-between;
    height: 18px;
    color: #777;
    line-height: 18px;
}

.chart {
    width: 100%;
    height: 259px;
    border: 1px solid #1f73a8;
}

.chart .lines {
    stroke: #d9e6ee;
    vector-effect: non-scaling-stroke;
}

.chart polygon {
    fill: rgba(17, 125, 187, 0.07);
    stroke: #2b84b5;
    vector-effect: non-scaling-stroke;
}

.stats {
    display: flex;
    gap: 21px;
    height: 24px;
    padding-top: 5px;
    color: #777;
    white-space: nowrap;
}

.stats b {
    margin-left: -4px;
    font-weight: normal;
    color: #000;
}
```
